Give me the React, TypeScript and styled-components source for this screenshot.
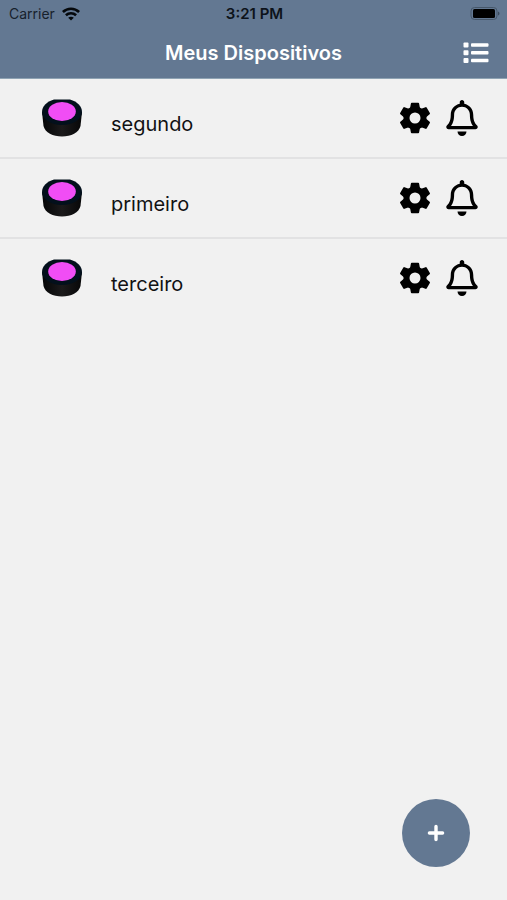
import React from 'react';
import styled, { createGlobalStyle } from 'styled-components';
import { FaRegBell } from 'react-icons/fa';

const GlobalStyle = createGlobalStyle`
  * { box-sizing: border-box; }
  body {
    margin: 0;
    background: #f1f1f1;
    color: #111214;
    font-family: Inter, "Liberation Sans", sans-serif;
  }
  button {
    border: 0;
    padding: 0;
    background: none;
    color: inherit;
    font: inherit;
    cursor: pointer;
  }
  svg { display: block; }
`;

const Screen = styled.div`
  min-height: 100vh;
  display: flex;
  flex-direction: column;
`;

const Header = styled.header`
  background: #637892;
  border-bottom: 1px solid #8fa3b3;
`;

const StatusBar = styled.div`
  display: grid;
  grid-template-columns: 1fr auto 1fr;
  align-items: center;
  height: 27px;
  padding: 0 7px 0 9px;
  font-size: 14px;
  line-height: 20px;
  color: #17212c;
`;

const Carrier = styled.div`
  display: flex;
  align-items: center;
  gap: 7px;
`;

const Clock = styled.time`
  font-size: 15px;
  font-weight: 600;
  color: #0d131a;
`;

const Battery = styled.div`
  justify-self: end;
`;

const NavBar = styled.div`
  display: grid;
  grid-template-columns: 1fr auto 1fr;
  align-items: center;
  height: 51px;
  padding: 0 18px;
  color: #fff;
`;

const Title = styled.h1`
  grid-column: 2;
  margin: 0;
  font-size: 20px;
  font-weight: 600;
  line-height: 24px;
`;

const MenuButton = styled.button`
  justify-self: end;
`;

const List = styled.ul`
  flex: 1;
  margin: 0;
  padding: 0;
  list-style: none;
`;

const Row = styled.li`
  display: flex;
  align-items: center;
  height: 80px;
  padding: 0 29px 0 42px;
  border-bottom: 2px solid #e2e2e3;
  &:last-child {
    border-color: transparent;
  }
`;

const Name = styled.span`
  flex: 1;
  padding: 12px 0 0 29px;
  font-size: 20px;
  line-height: 24px;
`;

const Actions = styled.div`
  display: flex;
  align-items: center;
  gap: 15px;
  color: #000;
`;

const BellIcon = styled(FaRegBell)`
  width: 32px;
  height: 36px;
`;

const Footer = styled.footer`
  display: flex;
  justify-content: flex-end;
  padding: 0 37px 33px 0;
`;

const AddButton = styled.button`
  display: grid;
  place-items: center;
  width: 68px;
  height: 68px;
  border-radius: 50%;
  background: #637892;
  color: #fff;
`;

const WifiIcon = () => (
  <svg width="18" height="14" viewBox="0 0 18 14" fill="none" stroke="#05080b" strokeWidth="2.6" aria-hidden="true">
    <path d="M.9 5C5.500.6 12.500.6 17.100 5" />
    <path d="M3.900 8.200c2.900-2.700 7.300-2.700 10.200 0" />
    <path d="M6.200 10.700c1.600-1.400 4-1.400 5.600 0L9 13.600z" fill="#05080b" stroke="none" />
  </svg>
);

const BatteryIcon = () => (
  <svg width="30" height="14" viewBox="0 0 30 14" role="img" aria-label="Bateria cheia">
    <rect x="1" y="0.5" width="26" height="12" rx="3.5" fill="none" stroke="#46576a" />
    <rect x="3" y="2" width="22" height="9" rx="1.5" fill="#000" />
    <path d="M28 4.500c2 .8 2 3.200 0 4z" fill="#3c4c5e" />
  </svg>
);

const ListIcon = () => (
  <svg width="26" height="22" viewBox="0 0 26 22" fill="#fff" aria-hidden="true">
    {[0.5, 8.2, 16].map((y) => (
      <React.Fragment key={y}>
        <rect x="0.5" y={y} width="5" height="5" rx="0.9" />
        <rect x="8" y={y + 0.8} width="17.5" height="3.4" rx="0.9" />
      </React.Fragment>
    ))}
  </svg>
);

const GearIcon = () => (
  <svg width="32" height="32" viewBox="0 0 32 32" aria-hidden="true">
    <circle cx="16" cy="16" r="8.5" fill="none" stroke="#000" strokeWidth="6" />
    {[0, 60, 120, 180, 240, 300].map((angle) => (
      <path
        key={angle}
        transform={`rotate(${angle} 16 16)`}
        d="M10.800 7.500 11.900 1.500Q12 .7 12.800.7h6.400q.8 0 .9.800l1.100 6z"
      />
    ))}
  </svg>
);

const DeviceIcon = () => (
  <svg width="40" height="38" viewBox="0 0 40 38" aria-hidden="true">
    <defs>
      <linearGradient id="deviceSide" x1="0" x2="1" y1="0" y2="0">
        <stop offset="0" stopColor="#040506" />
        <stop offset="0.5" stopColor="#1b1a1b" />
        <stop offset="1" stopColor="#070708" />
      </linearGradient>
    </defs>
    <path d="M0 13 1.500 27C3 33.500 11 37.500 20 37.500S37 33.500 38.500 27L40 13z" fill="url(#deviceSide)" />
    <path d="M12 .5H28C35.500 2.500 40 7.500 40 13c0 7.200-9 13-20 13S0 20.200 0 13C0 7.500 4.500 2.500 12 .5z" fill="#03101c" />
    <ellipse cx="20" cy="12.500" rx="13.800" ry="9.500" fill="#f14df5" />
  </svg>
);

const PlusIcon = () => (
  <svg width="18" height="18" viewBox="0 0 18 18" stroke="#fff" strokeWidth="3.4" strokeLinecap="round" aria-hidden="true">
    <path d="M9 2.400v13.200M2.400 9h13.200" />
  </svg>
);

const devices = ['segundo', 'primeiro', 'terceiro'];

export default function App() {
  return (
    <Screen>
      <GlobalStyle />
      <Header>
        <StatusBar>
          <Carrier>
            Carrier
            <WifiIcon />
          </Carrier>
          <Clock>3:21 PM</Clock>
          <Battery>
            <BatteryIcon />
          </Battery>
        </StatusBar>
        <NavBar>
          <Title>Meus Dispositivos</Title>
          <MenuButton type="button" aria-label="Menu">
            <ListIcon />
          </MenuButton>
        </NavBar>
      </Header>
      <List>
        {devices.map((device) => (
          <Row key={device}>
            <DeviceIcon />
            <Name>{device}</Name>
            <Actions>
              <button type="button" aria-label={`Configurar ${device}`}>
                <GearIcon />
              </button>
              <button type="button" aria-label={`Alertas de ${device}`}>
                <BellIcon />
              </button>
            </Actions>
          </Row>
        ))}
      </List>
      <Footer>
        <AddButton type="button" aria-label="Adicionar dispositivo">
          <PlusIcon />
        </AddButton>
      </Footer>
    </Screen>
  );
}
